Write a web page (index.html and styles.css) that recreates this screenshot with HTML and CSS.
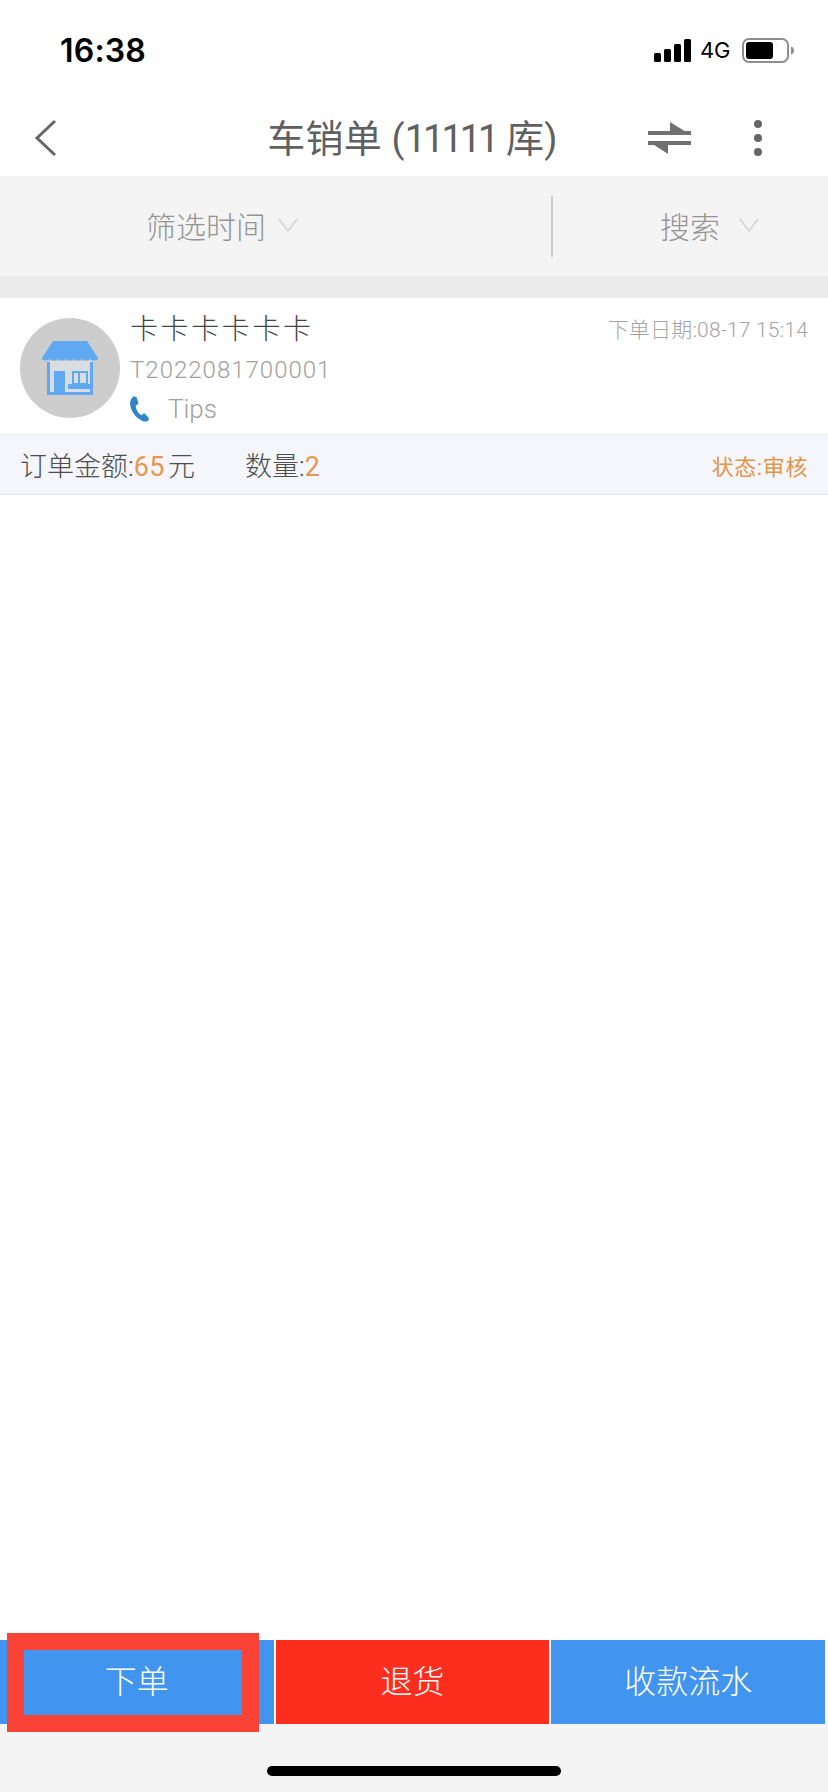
FILE: index.html
```html
<!DOCTYPE html>
<html lang="zh">

<head>
  <meta charset="UTF-8">
  <meta name="viewport" content="width=device-width, initial-scale=1.0">
  <title>车销单</title>
  <link rel="stylesheet" href="styles.css">
</head>

<body>
  <div class="page">
    <div class="status-bar">
      <span class="clock">16:38</span>
      <div class="status-icons">
        <svg class="signal" width="37" height="23" viewBox="0 0 37 23">
          <rect x="0" y="14" width="7" height="9" rx="1.5" />
          <rect x="10" y="10" width="7" height="13" rx="1.5" />
          <rect x="20" y="5" width="7" height="18" rx="1.5" />
          <rect x="30" y="0" width="7" height="23" rx="1.5" />
        </svg>
        <span class="network">4G</span>
        <svg class="battery" width="52" height="25" viewBox="0 0 52 25">
          <rect x="1" y="1" width="45" height="23" rx="6" fill="none" stroke="#8e8e8e" stroke-width="2" />
          <rect x="4" y="4" width="27" height="17" rx="3" fill="#000" />
          <path d="M49 8.500c2 .5 3 2 3 4s-1 3.500-3 4z" fill="#8e8e8e" />
        </svg>
      </div>
    </div>

    <div class="nav-bar">
      <svg class="back" width="24" height="38" viewBox="0 0 24 38">
        <path d="M22 2 4 19l18 17" fill="none" stroke="#666" stroke-width="3" />
      </svg>
      <h1 class="nav-title">车销单 (<span class="digits">11111</span> 库)</h1>
      <svg class="swap" width="43" height="32" viewBox="0 0 43 32">
        <path d="M0 9h43v4H0zM22 0l21 13H22z" fill="#707070" />
        <path d="M0 19h43v4H0zM0 19h20v13z" fill="#707070" />
      </svg>
      <div class="more">
        <span class="dot"></span>
        <span class="dot"></span>
        <span class="dot"></span>
      </div>
    </div>

    <div class="filter-bar">
      <div class="filter filter-time">
        <span>筛选时间</span>
        <svg class="chevron" width="20" height="14" viewBox="0 0 20 14">
          <path d="M1 1l9 12 9-12" fill="none" stroke="#d6d6d6" stroke-width="1.800" />
        </svg>
      </div>
      <div class="filter filter-search">
        <span>搜索</span>
        <svg class="chevron" width="20" height="14" viewBox="0 0 20 14">
          <path d="M1 1l9 12 9-12" fill="none" stroke="#d6d6d6" stroke-width="1.800" />
        </svg>
      </div>
    </div>

    <div class="band"></div>

    <div class="order-list">
      <div class="order">
        <div class="order-main">
          <div class="avatar">
            <svg width="56" height="54" viewBox="0 0 56 54">
              <path d="M5 20h46v34H5z" fill="#d9dde2" />
              <path d="M11 0H45L56 17a4 2.500 0 0 1-8 0a4 2.500 0 0 1-8 0a4 2.500 0 0 1-8 0a4 2.500 0 0 1-8 0a4 2.500 0 0 1-8 0a4 2.500 0 0 1-8 0a4 2.500 0 0 1-8 0z" fill="#5fa9f2" />
              <path d="M5 21h3v30h40V21h3v33H5z" fill="#5fa9f2" />
              <rect x="12" y="30" width="11" height="22" fill="#5fa9f2" />
              <path d="M30 30h16v14H30zm2 2v10h4V32zm6 0v10h6V32z" fill="#5fa9f2" />
              <rect x="26" y="43" width="24" height="5" fill="#5fa9f2" />
            </svg>
          </div>
          <div class="order-info">
            <div class="customer">卡卡卡卡卡卡</div>
            <div class="order-no">T2022081700001</div>
            <div class="contact">
              <svg class="phone" width="19" height="26" viewBox="0 0 20 27">
                <path d="M4 0 7 1l2 7-3 2c0 4 3 8 6 10l3-2 5 5-1 3c-2 1-4 1-6 0C6 23 1 16 0 8c0-3 1-6 4-8z" fill="#2f85c8" />
              </svg>
              <span>Tips</span>
            </div>
          </div>
          <div class="order-date">下单日期:08-17 15:14</div>
        </div>
        <div class="order-summary">
          <span class="amount">订单金额:<em>65</em>元</span>
          <span class="quantity">数量:<em>2</em></span>
          <span class="state">状态:审核</span>
        </div>
      </div>
    </div>

    <div class="actions">
      <button class="action action-blue">下单</button>
      <button class="action action-red">退货</button>
      <button class="action action-blue">收款流水</button>
      <div class="highlight"></div>
    </div>

    <div class="home-area">
      <div class="home-bar"></div>
    </div>
  </div>
</body>

</html>
```

FILE: styles.css
```css
* {
  box-sizing: border-box;
}

body {
  margin: 0;
  font-family: "Roboto", "Noto Sans CJK SC", sans-serif;
  background-color: white;
}

.page {
  display: flex;
  flex-direction: column;
  height: 1792px;
  overflow: hidden;
}

.status-bar {
  display: flex;
  justify-content: space-between;
  align-items: center;
  height: 100px;
  padding: 0 34px 0 60px;
}

.clock {
  font-family: "Inter", sans-serif;
  font-size: 32px;
  font-weight: 600;
  letter-spacing: 0.2px;
  color: black;
}

.status-icons {
  display: flex;
  align-items: center;
}

.signal {
  fill: black;
}

.network {
  margin: 0 12px 0 9px;
  font-family: "Inter", sans-serif;
  font-size: 22px;
  letter-spacing: -0.3px;
  color: black;
}

.nav-bar {
  display: flex;
  align-items: center;
  height: 76px;
  padding: 0 66px 0 33px;
}

.nav-title {
  flex: 1;
  margin: 0;
  padding: 0 0 6px 120px;
  text-align: center;
  font-size: 38px;
  font-weight: 400;
  letter-spacing: 0.2px;
  color: #606060;
}

.digits {
  letter-spacing: -3px;
}

.more {
  display: flex;
  flex-direction: column;
  gap: 6px;
  margin-left: 63px;
}

.dot {
  width: 8px;
  height: 8px;
  border-radius: 50%;
  background-color: #666;
}

.filter-bar {
  display: flex;
  align-items: center;
  height: 100px;
  background-color: #f4f4f4;
}

.filter {
  display: flex;
  align-items: center;
  height: 61px;
  font-size: 30px;
  font-weight: 300;
  color: #949494;
}

.filter-time {
  width: 551px;
  padding: 0 0 2px 146px;
  gap: 12px;
}

.filter-search {
  flex: 1;
  padding: 0 0 2px 107px;
  gap: 19px;
  border-left: 2px solid #cccccc;
}

.band {
  height: 22px;
  background-color: #ebebeb;
}

.order-list {
  flex: 1;
}

.order-main {
  display: flex;
  height: 136px;
  padding: 20px 20px 0 20px;
}

.avatar {
  display: flex;
  align-items: center;
  justify-content: center;
  width: 100px;
  height: 100px;
  border-radius: 50%;
  background-color: #cdcdcd;
}

.order-info {
  flex: 1;
  margin-left: 10px;
  margin-top: -4px;
}

.customer {
  font-size: 28px;
  font-weight: 300;
  letter-spacing: 2.600px;
  line-height: 32px;
  color: #444444;
}

.order-no {
  margin-top: 9px;
  font-size: 24px;
  font-weight: 300;
  letter-spacing: 1px;
  line-height: 30px;
  color: #a0a0a0;
}

.contact {
  display: flex;
  align-items: center;
  gap: 19px;
  margin-top: 9px;
  font-size: 26px;
  font-weight: 300;
  color: #a0a0a0;
}

.order-date {
  font-size: 21px;
  font-weight: 300;
  letter-spacing: 0.2px;
  line-height: 24px;
  color: #a4a4a4;
}

.order-summary {
  display: flex;
  align-items: center;
  height: 61px;
  padding: 0 20px;
  font-size: 27px;
  font-weight: 300;
  color: #4d4d4d;
  background-color: #f5f6fb;
  border-top: 1px solid #ececec;
  border-bottom: 1px solid #e6e6e6;
}

.order-summary em {
  font-style: normal;
  font-weight: 400;
  letter-spacing: 0.5px;
  color: #e8964f;
}

.amount em {
  margin-right: 3px;
}

.quantity {
  margin-left: 50px;
}

.state {
  margin-left: auto;
  font-size: 22px;
  font-weight: 400;
  letter-spacing: 0.6px;
  color: #e0954a;
}

.actions {
  position: relative;
  display: flex;
  gap: 2px;
  height: 84px;
  padding-right: 3px;
}

.action {
  flex: 1;
  border: none;
  padding: 0 0 6px;
  font-family: inherit;
  font-size: 32px;
  font-weight: 300;
  color: white;
}

.action-blue {
  background-color: #4295ef;
}

.action-red {
  background-color: #fe2e1e;
}

.highlight {
  position: absolute;
  left: 7px;
  top: -7px;
  width: 252px;
  height: 99px;
  border: 17px solid #fb4237;
}

.home-area {
  display: flex;
  justify-content: center;
  height: 68px;
  padding-top: 42px;
  background-color: #f4f4f4;
}

.home-bar {
  width: 294px;
  height: 10px;
  border-radius: 5px;
  background-color: black;
}
```
